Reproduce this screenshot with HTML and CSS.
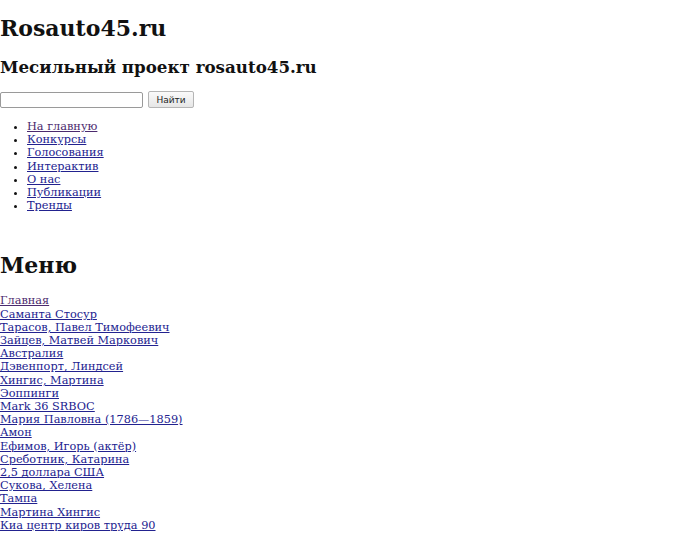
FILE: index.html
```html
<!DOCTYPE html>
<html lang="ru">
<head>
    <meta charset="UTF-8">
    <title>Rosauto45.ru</title>
    <link rel="stylesheet" href="styles.css">
</head>
<body>

    <div class="header">
        <h1 class="site-title">Rosauto45.ru</h1>
        <h2 class="site-desc">Месильный проект rosauto45.ru</h2>
        <form class="search">
            <input type="text" class="search-input">
            <button type="button" class="search-btn">Найти</button>
        </form>
    </div>

    <ul class="nav">
        <li><a href="#" class="visited">На главную</a></li>
        <li><a href="#">Конкурсы</a></li>
        <li><a href="#">Голосования</a></li>
        <li><a href="#">Интерактив</a></li>
        <li><a href="#">О нас</a></li>
        <li><a href="#">Публикации</a></li>
        <li><a href="#">Тренды</a></li>
    </ul>

    <div class="sidebar">
        <h2 class="menu-title">Меню</h2>
        <div class="menu-links">
            <a href="#" class="visited">Главная</a>
            <a href="#">Саманта Стосур</a>
            <a href="#">Тарасов, Павел Тимофеевич</a>
            <a href="#">Зайцев, Матвей Маркович</a>
            <a href="#">Австралия</a>
            <a href="#">Дэвенпорт, Линдсей</a>
            <a href="#">Хингис, Мартина</a>
            <a href="#">Эоппинги</a>
            <a href="#">Mark 36 SRBOC</a>
            <a href="#">Мария Павловна (1786—1859)</a>
            <a href="#">Амон</a>
            <a href="#">Ефимов, Игорь (актёр)</a>
            <a href="#">Среботник, Катарина</a>
            <a href="#">2,5 доллара США</a>
            <a href="#">Сукова, Хелена</a>
            <a href="#">Тампа</a>
            <a href="#">Мартина Хингис</a>
            <a href="#">Киа центр киров труда 90</a>
            <a href="#">Новости сайта</a>
        </div>
    </div>

</body>
</html>
```

FILE: styles.css
```css
body {
    margin: 0;
    font-family: "DejaVu Serif", serif;
    font-size: 11.3px;
    line-height: 13.2px;
    color: #111;
    background: #fff;
}

a {
    color: #22228f;
}

a.visited {
    color: #4b2a6e;
}

.site-title {
    font-size: 22px;
    line-height: 26px;
    margin: 15px 0 0;
}

.site-desc {
    font-size: 16.7px;
    line-height: 20px;
    margin: 16px 0 0;
}

.search {
    margin: 14px 0 0;
    display: flex;
    align-items: center;
    gap: 5px;
}

.search-input {
    width: 143px;
    height: 16px;
    box-sizing: border-box;
    border: 1px solid #9a9a9a;
    border-radius: 2px;
    padding: 0;
    margin: 0;
}

.search-btn {
    height: 17px;
    width: 46px;
    padding: 0;
    font-family: "DejaVu Sans", sans-serif;
    font-size: 9px;
    color: #222;
    background: linear-gradient(#fafafa, #e6e6e6);
    border: 1px solid #b5b5b5;
    border-radius: 2px;
}

.nav {
    margin: 12px 0 0;
    padding-left: 27px;
}

.sidebar {
    margin-top: 40px;
}

.menu-title {
    font-size: 22px;
    line-height: 26px;
    margin: 0 0 16px;
}

.menu-links a {
    display: block;
    width: max-content;
}
```
